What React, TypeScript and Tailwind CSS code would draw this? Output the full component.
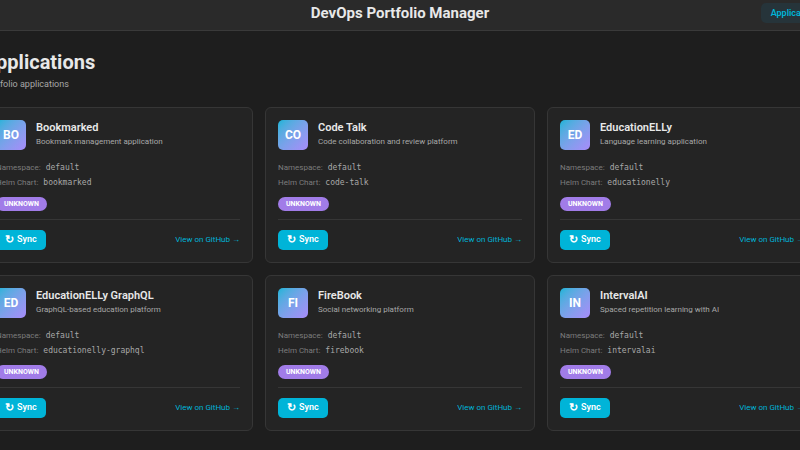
type Application = {
  name: string;
  initials: string;
  summary: string;
  namespace: string;
  chart: string;
};

const applications: Application[] = [
  { name: 'Bookmarked', initials: 'BO', summary: 'Bookmark management application', namespace: 'default', chart: 'bookmarked' },
  { name: 'Code Talk', initials: 'CO', summary: 'Code collaboration and review platform', namespace: 'default', chart: 'code-talk' },
  { name: 'EducationELLy', initials: 'ED', summary: 'Language learning application', namespace: 'default', chart: 'educationelly' },
  { name: 'EducationELLy GraphQL', initials: 'ED', summary: 'GraphQL-based education platform', namespace: 'default', chart: 'educationelly-graphql' },
  { name: 'FireBook', initials: 'FI', summary: 'Social networking platform', namespace: 'default', chart: 'firebook' },
  { name: 'IntervalAI', initials: 'IN', summary: 'Spaced repetition learning with AI', namespace: 'default', chart: 'intervalai' },
];

export default function App() {
  return (
    <div className="min-h-screen overflow-hidden bg-[#1e1e1e] font-[Roboto,sans-serif] text-[#e8e8e8]">
      <Header />
      {/* The page is a little wider than the window and stays centred on it */}
      <main className="-mx-[17px] pt-5 pb-5">
        <h1 className="text-[20px] leading-[22px] font-bold">Applications</h1>
        <p className="mt-1 text-[9px] leading-[14px] text-[#a8a8a8]">Portfolio applications</p>
        <div className="mt-4 grid grid-cols-3 gap-3">
          {applications.map((application) => (
            <ApplicationCard key={application.name} application={application} />
          ))}
        </div>
      </main>
    </div>
  );
}

function Header() {
  return (
    <header className="-mx-[17px] grid h-[31px] grid-cols-[1fr_auto_1fr] items-start border-b border-[#3a3a3a] bg-[#2a2a2a] pt-[3px]">
      <p className="col-start-2 text-[15px] leading-5 font-bold">DevOps Portfolio Manager</p>
      <nav className="-mr-3.5 flex justify-end">
        <a href="#applications" className="rounded-[5px] bg-[#26343a] px-[10px] text-[9px] leading-5 font-semibold text-[#00b4d8]">
          Applications
        </a>
      </nav>
    </header>
  );
}

function ApplicationCard({ application }: { application: Application }) {
  return (
    <article className="rounded-md border border-[#363636] bg-[#242424] p-3">
      <div className="flex gap-[10px]">
        <div className="flex size-[30px] shrink-0 items-center justify-center rounded-[5px] bg-linear-135 from-[#00b4d8] to-[#a78bfa] text-[12px] font-bold text-white">
          {application.initials}
        </div>
        <div className="min-w-0">
          <h2 className="text-[11px] leading-[15px] font-semibold">{application.name}</h2>
          <p className="text-[8px] leading-[14px] text-[#a8a8a8]">{application.summary}</p>
        </div>
      </div>

      <dl className="mt-[10px] text-[8px] leading-[15px]">
        <MetaRow label="Namespace:" value={application.namespace} />
        <MetaRow label="Helm Chart:" value={application.chart} />
      </dl>

      <span className="mt-[7px] block w-fit rounded-full bg-[#a17ce8] px-2 text-[7px] leading-[14px] font-bold text-white">UNKNOWN</span>

      <div className="mt-2 flex items-center justify-between border-t border-[#363636] pt-[10px]">
        <button type="button" className="flex h-5 items-center gap-[3px] rounded-[5px] bg-[#00b4d8] px-[9px] text-[9px] font-semibold text-white">
          <span className="text-[11px]">↻</span>
          Sync
        </button>
        <a href="#github" className="text-[8px] leading-5 text-[#00b4d8]">
          View on GitHub →
        </a>
      </div>
    </article>
  );
}

function MetaRow({ label, value }: { label: string; value: string }) {
  return (
    <div className="flex gap-[5px]">
      <dt className="text-[#7c7c7c]">{label}</dt>
      <dd className="font-['DejaVu_Sans_Mono',monospace] text-[#a8a8a8]">{value}</dd>
    </div>
  );
}
